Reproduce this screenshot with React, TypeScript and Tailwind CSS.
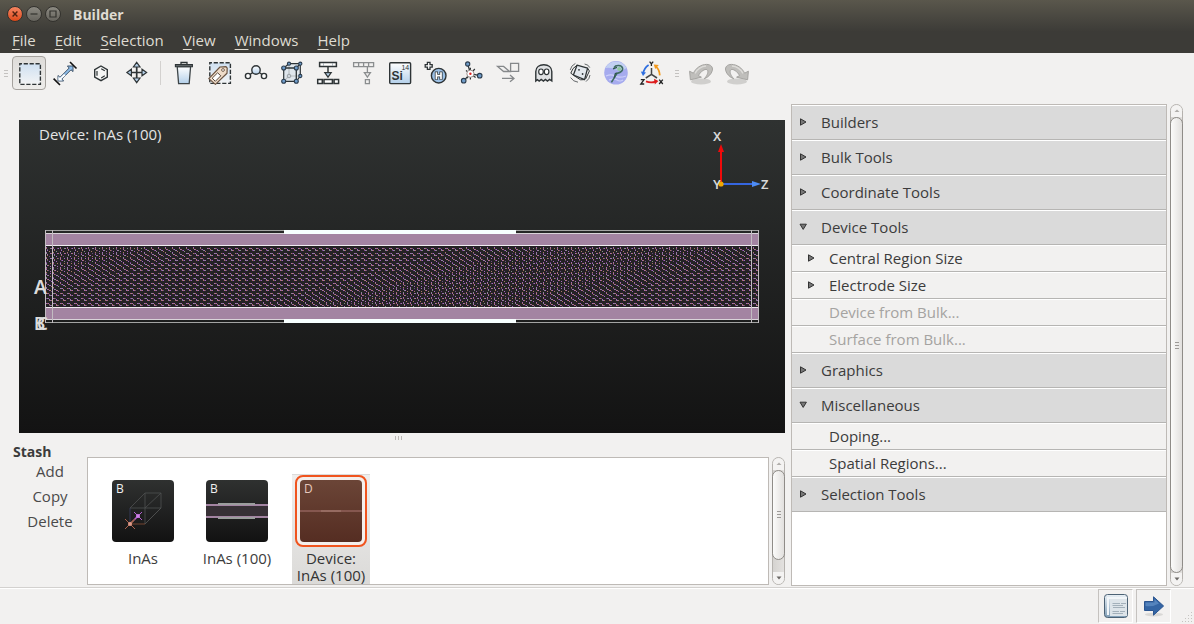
import { useState } from "react";
import type { ReactNode } from "react";

const INK = "#2e3436";
const BLUE = "#b4cfe8";

function Icon({ children }: { children: ReactNode }) {
  return (
    <svg viewBox="0 0 28 28" className="size-7" fill="none" stroke={INK} strokeWidth="1.4" aria-hidden="true">
      {children}
    </svg>
  );
}

function Dot({ x, y, r = 2 }: { x: number; y: number; r?: number }) {
  return <circle cx={x} cy={y} r={r} fill="#6f9cc9" stroke="#2b3c4e" strokeWidth="1.1" />;
}

const tools: { name: string; icon: ReactNode }[] = [
  {
    name: "Rectangle select",
    icon: (
      <>
        <defs>
          <linearGradient id="sky" x1="0" y1="0" x2="0" y2="1">
            <stop offset="0" stopColor="#cfe0f1" />
            <stop offset="1" stopColor="#f3f4f5" />
          </linearGradient>
          <linearGradient id="pale" x1="0" y1="0" x2="0" y2="1">
            <stop offset="0" stopColor="#ffffff" />
            <stop offset="1" stopColor="#b4d0ea" />
          </linearGradient>
        </defs>
        <rect x="4.8" y="4.8" width="20.6" height="20.6" fill="url(#sky)" strokeDasharray="4.2 1.7" strokeDashoffset="2" strokeWidth="1.4" />
      </>
    ),
  },
  {
    name: "Measure",
    icon: (
      <>
        <path d="M7 22V16.5L9 18.3L18.2 9L16.4 7H22V12.6L20 10.8L10.8 20L12.6 22Z" fill="#8dbce8" stroke="#40546a" strokeWidth="1" />
        <path d="M7.4 21.5V17.3L9 19L13 15L14.6 16.2L10.2 20L11.6 21.5Z" fill="#fff" stroke="none" />
        <path d="M2.6 19.6L9 26M19 3L25.5 9.5" stroke="#111" strokeWidth="1.6" />
      </>
    ),
  },
  {
    name: "Hexagon",
    icon: (
      <>
        <path d="M14 7L20.3 10.6V18L14 21.6L7.7 18V10.6Z" fill="#f6f6f5" />
        <path d="M14.2 9.7L17.8 11.8M17.8 16.8L14.2 18.9M10 11.9V16.7" strokeWidth="1.2" />
      </>
    ),
  },
  {
    name: "Move",
    icon: (
      <>
        <path d="M13.7 7V20.5M7 13.5H20.5" strokeWidth="1.7" />
        <path d="M13.7 3.4L17 8H10.4ZM13.7 23.6L17 19H10.4ZM3.9 13.5L8.4 10.2V16.8ZM23.6 13.5L19 10.2V16.8Z" fill={BLUE} strokeWidth="1.2" />
      </>
    ),
  },
  {
    name: "Delete",
    icon: (
      <>
        <path d="M7.2 7.5H20.6L19.2 24.6H8.6Z" fill="url(#pale)" stroke="#3e4548" strokeWidth="1.3" />
        <path d="M5.4 7.8V5.6H22.4V7.8Z" fill="#6f7477" strokeWidth="1.1" />
        <path d="M11 5V3.5H17V5" strokeWidth="1.3" />
      </>
    ),
  },
  {
    name: "Tag selection",
    icon: (
      <>
        <rect x="3.8" y="3.8" width="20.6" height="20.6" fill="url(#sky)" strokeDasharray="4.2 1.7" strokeDashoffset="2" strokeWidth="1.4" />
        <path d="M2.8 19.6L14 8L20 7.7L21.2 9.2L21 14.2L9.4 25.4Z" fill="#efdcc9" stroke="#6b5442" strokeWidth="1.2" strokeLinejoin="round" />
        <path d="M6.2 19.2L11.6 13.8L14.8 16.8L9.3 22.3Z" fill="#fff" stroke="#56473b" strokeWidth="1" />
        <circle cx="17" cy="11" r="1.4" fill="#fff" stroke="#6b5442" strokeWidth="0.9" />
      </>
    ),
  },
  {
    name: "Molecule",
    icon: (
      <>
        <path d="M6 17L14 11L22 17" />
        <circle cx="14" cy="11" r="4.2" fill="url(#pale)" />
        <circle cx="6" cy="17" r="2.6" fill="#fff" />
        <circle cx="22" cy="17" r="2.6" fill="#fff" />
      </>
    ),
  },
  {
    name: "Unit cell",
    icon: (
      <>
        <path d="M5.7 9L11 4.7H22.3V17L18.3 22.3H5.7Z" fill="#dfe6ec" strokeWidth="1.2" />
        <path d="M11 4.7V17H22.3M11 17L5.7 22.3" stroke="#b9bdc0" strokeWidth="1.1" />
        <path d="M5.7 9H18.3V22.3M18.3 9L22.3 4.7" strokeWidth="1.3" />
        <circle cx="11" cy="17" r="1.8" fill="#cfd6dc" stroke="#9aa0a5" strokeWidth="1" />
        <Dot x={5.7} y={9} /><Dot x={18.3} y={9} /><Dot x={5.7} y={22.3} /><Dot x={18.3} y={22.3} />
        <Dot x={11} y={4.7} r={1.6} /><Dot x={22.3} y={4.7} r={1.6} /><Dot x={22.3} y={17} r={1.6} />
      </>
    ),
  },
  {
    name: "Split into device",
    icon: (
      <>
        <g fill="#fff" strokeWidth="1.5">
          <path d="M5.6 3.6H22.4V7.6H5.6ZM3.7 20.6H8.3V24.6H3.7ZM10 20.6H18.4V24.6H10ZM20.1 20.6H24.6V24.6H20.1Z" />
          <path d="M14 8V13.6" />
          <path d="M10.8 13.6H17.2L14 18.2Z" fill={BLUE} strokeWidth="1.2" />
        </g>
        <path d="M9.5 4V7M18.5 4V7" stroke="#9aa3aa" strokeWidth="0.7" />
      </>
    ),
  },
  {
    name: "Extract electrode",
    icon: (
      <g stroke="#8b8e8f" strokeWidth="1.3">
        <path d="M3.6 3.6H23.6V7.6H3.6ZM8.6 3.6V7.6M13.6 3.6V7.6M18.6 3.6V7.6" />
        <path d="M17.4 8V13.6M14.4 13.6H20.4L17.4 18ZM15.4 20.6H19.4V24.6H15.4Z" />
      </g>
    ),
  },
  {
    name: "Change element",
    icon: (
      <>
        <rect x="3.7" y="3.7" width="20.9" height="20.9" rx="1" fill="url(#pale)" />
        <text x="5.6" y="21.4" fontSize="12" fontWeight="700" fontFamily="Liberation Sans, sans-serif" fill={INK} stroke="none">Si</text>
        <text x="15.4" y="11" fontSize="7" fontFamily="Liberation Sans, sans-serif" fill={INK} stroke="none">14</text>
      </>
    ),
  },
  {
    name: "Add hydrogen",
    icon: (
      <>
        <circle cx="16.7" cy="16.7" r="7.3" fill="#9cc1e6" strokeWidth="1.4" />
        <path d="M14.4 12.6V20.8M19 12.6V20.8M14.4 16.7H19" strokeWidth="3.2" />
        <path d="M14.4 13.2V20.2M19 13.2V20.2M14.4 16.7H19" stroke="#fff" strokeWidth="1.7" />
        <path d="M5.4 3.4H8V5.6H10.2V8.2H8V10.4H5.4V8.2H3.2V5.6H5.4Z" fill="#fff" strokeWidth="1.3" />
      </>
    ),
  },
  {
    name: "Select neighbours",
    icon: (
      <>
        <path d="M9.7 5L12.4 14.7L5.7 21.7M12.4 14.7L21.7 16.7M16.8 10L8.6 19.4M8 11.4L17.6 18.6M12.4 8.8V20.6" strokeWidth="1.2" />
        <circle cx="12.4" cy="14.7" r="3.6" fill="#fff" stroke="#9b8f8d" strokeWidth="1" />
        <circle cx="12.4" cy="14.7" r="1.2" fill="#d22" stroke="none" />
        <Dot x={9.7} y={5} r={2.1} /><Dot x={5.7} y={21.7} r={2.3} /><Dot x={21.7} y={16.7} r={2.3} />
      </>
    ),
  },
  {
    name: "Shear",
    icon: (
      <g stroke="#85888a" strokeWidth="1.3">
        <path d="M3.6 7.4H9.6L15.7 12.5H9.6Z" />
        <path d="M16.6 4.4H24.6V12.4H16.6Z" />
        <path d="M8 19.4H20M16 16L20 19.4L16 22.8" />
      </g>
    ),
  },
  {
    name: "Ghost atoms",
    icon: (
      <>
        <path d="M5.8 22V12.6C5.8 8 9.4 5.8 13.8 5.8C18.2 5.8 21.8 8 21.8 12.6V22L19.6 20.4L17.4 22L15.4 20.4L13.4 22L11.2 20.4L9.2 22L7.4 20.6Z" fill="#e0e2e4" strokeWidth="1.4" />
        <ellipse cx="11" cy="12.8" rx="2.3" ry="2.8" fill="#fff" strokeWidth="1.2" />
        <ellipse cx="16.6" cy="12.8" rx="2.3" ry="2.8" fill="#fff" strokeWidth="1.2" />
      </>
    ),
  },
  {
    name: "Rattle",
    icon: (
      <>
        <path d="M11 6.2L21.6 9.2L18.6 20.6L7.4 16Z" fill="#e3e8ed" strokeWidth="1.3" strokeLinejoin="round" />
        <path d="M11 6.2L7 9.6L4.8 14.2L7.4 16M7.6 16.4L14.6 20.8L18.6 20.6M21.6 9.2L23.4 12L19.6 20" strokeWidth="1" />
        <path d="M4.2 11Q5 6.6 9.4 4.4M18.6 5Q22.6 5.6 23.8 8.6M4.6 18.6Q7 22.6 12 23.2M24 16Q23.6 20 20 22.6" stroke="#54585a" strokeWidth="0.9" />
        <circle cx="13" cy="10.8" r="0.9" fill={INK} stroke="none" />
        <circle cx="16.6" cy="15" r="0.9" fill={INK} stroke="none" />
      </>
    ),
  },
  {
    name: "Optimizer",
    icon: (
      <>
        <circle cx="14" cy="13.8" r="11.8" fill="#a6abee" stroke="none" />
        <path d="M3.4 9A11.8 11.8 0 0 1 24.6 9Q19 13 14 10.6T3.4 9Z" fill="#c2d0f2" stroke="none" />
        <path d="M4 17Q9 14.6 13 17T24 17M7 21Q12 19 15 21T21 21" stroke="#cdd0fa" strokeWidth="1.2" />
        <path d="M12 8.6C13.6 5.8 19.8 5.8 20.6 9.2C21.2 12.6 17.6 13.8 15 14.4L9.4 23.4" stroke="#3f6c62" strokeWidth="1.6" />
        <path d="M11 9.8L15 8.4M15 14L13.4 14.6L12.2 19" stroke="#2f574d" strokeWidth="1.3" />
        <circle cx="17.2" cy="10" r="2.1" fill="#8fc6a0" stroke="none" />
      </>
    ),
  },
  {
    name: "Rotate axes",
    icon: (
      <>
        <path d="M13.5 9V15.4L7.8 19M13.5 15.4L19 19" stroke="#444" strokeWidth="1.5" />
        <path d="M10.6 6Q6 9 5 15" stroke="#2f6fe0" strokeWidth="1.8" />
        <path d="M2.8 12.6L5 17L8 13.4Z" fill="#2f6fe0" stroke="none" />
        <path d="M21.8 16.4Q21.4 10.4 18 7.6" stroke="#f59a1b" strokeWidth="1.8" />
        <path d="M15.8 5.4L20.8 6L17.2 10Z" fill="#f59a1b" stroke="none" />
        <path d="M8 22.4Q13 24.4 17.4 22.6" stroke="#dd1c1c" strokeWidth="1.8" />
        <path d="M16 19.8L20.4 22L16.8 25.4Z" fill="#dd1c1c" stroke="none" />
        <path d="M11.6 2.6L13.4 4.8M15.2 2.6L13.4 4.8V7M2.8 20.6H6L2.8 25H6.2M21.2 20.6L24.8 25M24.8 20.6L21.2 25" stroke="#222" strokeWidth="1.3" />
      </>
    ),
  },
];

function HistoryArrow({ flip }: { flip?: boolean }) {
  return (
    <svg viewBox="0 0 28 28" className={flip ? "size-7 -scale-x-100" : "size-7"} aria-hidden="true">
      <ellipse cx="14" cy="22.4" rx="10" ry="3" fill="#d0cfcd" />
      <path
        d="M2.6 12.2L6.4 14.2C8.8 9 14 5.4 19.6 5.4C23.8 5.4 26 8 25.4 11.2C24.6 15 21 18.4 17.2 19.8C19.8 17 21.6 13.6 20.6 11.4C19.2 8.8 14 11.8 11.4 16.6L14.4 18.2L3.4 20.8Z"
        fill="#bfbebb"
        stroke="#a5a4a1"
        strokeWidth="1"
      />
      <path d="M8 14.4Q12 7.4 19 7" fill="none" stroke="#dddcd9" strokeWidth="1.4" />
    </svg>
  );
}

function ToolButton({ name, active, children }: { name: string; active?: boolean; children: ReactNode }) {
  return (
    <button
      type="button"
      aria-label={name}
      title={name}
      className={
        active
          ? "flex size-[34px] items-center justify-center rounded border border-[#a5a29e] bg-linear-to-b from-[#dedcd9] to-[#eeedeb]"
          : "flex size-[34px] items-center justify-center rounded"
      }
    >
      {children}
    </button>
  );
}

function Grip() {
  return (
    <span className="flex w-1 flex-col gap-[2px]">
      <i className="h-px bg-[#c4c2c0]" />
      <i className="h-px bg-[#c4c2c0]" />
      <i className="h-px bg-[#c4c2c0]" />
    </span>
  );
}

/* Zinc-blende lattice seen along Y: small bonds whose form drifts slowly along Z. */
const LATTICE_COLORS = ["#a566bd", "#a87664", "#868f86", "#6d4a80"];
const LATTICE = (() => {
  const paths = ["", "", "", ""];
  const forms = [
    [[0, 0], [0, 1], [1, 2], [1, 3], [4, 1], [5, 1], [3, 4]],
    [[0, 0], [0, 1], [0, 2], [1, 3], [2, 3], [4, 4], [4, 1]],
    [[0, 0], [0, 1], [1, 2], [2, 2], [3, 3], [4, 3], [5, 4]],
    [[0, 1], [1, 1], [2, 1], [3, 2], [3, 3], [4, 3], [5, 3]],
  ];
  for (let j = 0; j < 12; j++) {
    for (let i = 0; i < 102; i++) {
      const phase = i / 26 + j / 10;
      const form = forms[Math.floor(Math.abs(Math.sin(phase)) * 3.99)];
      form.forEach(([u, v], k) => {
        const x = 27 + i * 7 + u;
        const y = 127 + j * 5 + v;
        if (x > 739 || y > 186) return;
        const mix = (k * 3 + (i % 2) + j * 2) % 7;
        const color = mix < 3 ? 0 : mix < 5 ? 1 : mix < 6 ? 2 : 3;
        paths[color] += `M${x} ${y}h1v1h-1z`;
      });
    }
  }
  return paths;
})();

function Scene() {
  return (
    <svg viewBox="0 0 766 313" preserveAspectRatio="xMidYMid slice" className="block h-full w-full" role="img" aria-label="Device model">
      <rect x="27" y="114" width="712" height="12" fill="#a384a2" />
      <rect x="27" y="188" width="712" height="11" fill="#a384a2" />
      <g shapeRendering="crispEdges">
        <rect x="27" y="126" width="712" height="61" fill="#242225" />
        {LATTICE.map((d, k) => (
          <path key={k} d={d} fill={LATTICE_COLORS[k]} />
        ))}
        <path d="M27 110.5H740M27 202.5H740" stroke="#a3a4a3" />
        <path d="M27 113.5H740M27 199.5H740" stroke="#d9d4d9" />
        <path d="M27 125.5H740M27 187.5H740" stroke="#efeaef" />
        <path d="M26.5 110V203M33.5 110V203M732.5 110V203M739.5 110V203" stroke="#c2bcc1" />
        <path d="M265 110H497V114H265ZM265 199H497V203H265Z" fill="#f7ffff" />
      </g>
      <path d="M702 63V32" stroke="#f00a0a" strokeWidth="2" />
      <path d="M702 24L705 32H699Z" fill="#f00a0a" />
      <path d="M703 64H734" stroke="#3566e0" strokeWidth="2" />
      <path d="M742 64L733 61V67Z" fill="#4d8cf5" />
      <circle cx="702" cy="64" r="2.6" fill="#f0a800" />
      <g fill="#d8d8d8" fontFamily="Noto Sans, sans-serif" fontWeight="600" fontSize="13">
        <text x="694" y="21">X</text>
        <text x="694" y="69">Y</text>
        <text x="742" y="69">Z</text>
      </g>
      <g fill="#dcdcdc" fontFamily="Noto Sans, sans-serif" fontWeight="600" fontSize="19">
        <text x="15" y="174">A</text>
        <text x="15" y="210" fontSize="17">B</text>
        <text x="18" y="210" fontSize="17">C</text>
      </g>
    </svg>
  );
}

function Scrollbar({ thumb }: { thumb: string }) {
  return (
    <div className="flex w-[13px] shrink-0 flex-col rounded-full border border-[#b5b2ae] bg-linear-to-r from-[#d5d3d0] to-[#e3e1df]" aria-hidden="true">
      <div className="flex h-3 shrink-0 items-center justify-center rounded-t-full bg-[#f4f3f2]">
        <svg viewBox="0 0 6 4" className="h-1 w-1.5"><path d="M0.5 3L3 0.5L5.5 3Z" fill="#b0adaa" /></svg>
      </div>
      <div className="flex grow flex-col">
        <div className={`${thumb} -mx-px flex flex-col items-center justify-center gap-[2px] rounded-full border border-[#8f8c88] bg-linear-to-r from-[#fbfbfa] to-[#e2e0de]`}>
          <i className="h-px w-1 bg-[#9d9a97]" />
          <i className="h-px w-1 bg-[#9d9a97]" />
          <i className="h-px w-1 bg-[#9d9a97]" />
        </div>
      </div>
      <div className="flex h-3 shrink-0 items-center justify-center rounded-b-full bg-[#f4f3f2]">
        <svg viewBox="0 0 6 4" className="h-1 w-1.5"><path d="M0.5 0.5L3 3.5L5.5 0.5Z" fill="#6b6865" /></svg>
      </div>
    </div>
  );
}

function Disclosure({ open }: { open?: boolean }) {
  return (
    <svg viewBox="0 0 8 8" className="size-2 shrink-0" fill="#777" stroke="#333" aria-hidden="true">
      {open ? <path d="M1 1.2H7.4L4.2 6.4Z" /> : <path d="M1.5 0.8L7 4L1.5 7.2Z" />}
    </svg>
  );
}

type Entry = { label: string; arrow?: boolean; disabled?: boolean };
const sections: { title: string; open?: boolean; entries: Entry[] }[] = [
  { title: "Builders", entries: [] },
  { title: "Bulk Tools", entries: [] },
  { title: "Coordinate Tools", entries: [] },
  {
    title: "Device Tools",
    open: true,
    entries: [
      { label: "Central Region Size", arrow: true },
      { label: "Electrode Size", arrow: true },
      { label: "Device from Bulk...", disabled: true },
      { label: "Surface from Bulk...", disabled: true },
    ],
  },
  { title: "Graphics", entries: [] },
  { title: "Miscellaneous", open: true, entries: [{ label: "Doping..." }, { label: "Spatial Regions..." }] },
  { title: "Selection Tools", entries: [] },
];

function Section({ title, open: initial, entries }: { title: string; open?: boolean; entries: Entry[] }) {
  const [open, setOpen] = useState(!!initial);
  return (
    <section>
      <button
        type="button"
        aria-expanded={open}
        onClick={() => setOpen(!open)}
        className="flex h-[35px] w-full items-center gap-[14px] border-t border-b border-t-white border-b-[#b6b5b3] bg-[#dadada] pb-px pl-[7px] text-left"
      >
        <Disclosure open={open} />
        {title}
      </button>
      {open &&
        entries.map((e) => (
          <button
            key={e.label}
            type="button"
            disabled={e.disabled}
            className="flex h-[27px] w-full items-center gap-[14px] border-t border-b border-t-white border-b-[#b6b5b3] bg-[#f2f1f0] pb-px pl-[15px] text-left disabled:text-[#a5a3a1]"
          >
            {e.arrow ? <Disclosure /> : <span className="size-2" />}
            {e.label}
          </button>
        ))}
    </section>
  );
}

function Thumb({ letter, children }: { letter: string; children: ReactNode }) {
  return (
    <svg viewBox="0 0 62 62" className="block size-[62px] rounded" aria-hidden="true">
      <defs>
        <linearGradient id={`thumb-${letter}`} x1="0" y1="0" x2="0" y2="1">
          <stop offset="0" stopColor={letter === "D" ? "#6b4537" : "#2f3130"} />
          <stop offset="1" stopColor={letter === "D" ? "#552d22" : "#121212"} />
        </linearGradient>
      </defs>
      <rect width="62" height="62" fill={`url(#thumb-${letter})`} />
      {children}
      <text x="4" y="13" fontSize="12" fontFamily="Open Sans, sans-serif" fill={letter === "D" ? "#e6c9bd" : "#f0f0f0"}>{letter}</text>
    </svg>
  );
}

const menus = ["File", "Edit", "Selection", "View", "Windows", "Help"];

export default function App() {
  return (
    <div className="flex min-h-screen flex-col bg-[#f2f1f0] font-['Open_Sans',sans-serif] text-[15px] leading-5 text-[#3c3c3c]">
      <header className="bg-linear-to-b from-[#5a574c] to-[#3c3b37] to-60% text-[#dfdbd2]">
        <div className="flex h-7 items-center pl-[7px]">
          <div className="flex gap-[3px]">
            <button type="button" aria-label="Close" className="size-4 rounded-full border border-[#33322e] bg-linear-to-b from-[#f58560] to-[#dd4814]">
              <svg viewBox="0 0 14 14" className="size-full" stroke="#4d2110" strokeWidth="1.4"><path d="M4.6 4.6L9.4 9.4M9.4 4.6L4.6 9.4" /></svg>
            </button>
            <button type="button" aria-label="Minimize" className="size-4 rounded-full border border-[#33322e] bg-linear-to-b from-[#8c8a82] to-[#66645d]">
              <svg viewBox="0 0 14 14" className="size-full" stroke="#33322e" strokeWidth="1.2"><path d="M3.5 7H10.5" /></svg>
            </button>
            <button type="button" aria-label="Maximize" className="size-4 rounded-full border border-[#33322e] bg-linear-to-b from-[#8c8a82] to-[#66645d]">
              <svg viewBox="0 0 14 14" className="size-full" stroke="#33322e" strokeWidth="1.2" fill="none"><path d="M4 4H10V10H4Z" /></svg>
            </button>
          </div>
          <h1 className="ml-3 pt-[2px] text-[14px] font-bold">Builder</h1>
        </div>
        <nav className="flex h-[25px] items-center gap-[19px] pb-px pl-3">
          {menus.map((m) => (
            <button key={m} type="button">
              <span className="underline underline-offset-3">{m[0]}</span>
              {m.slice(1)}
            </button>
          ))}
        </nav>
      </header>

      <div role="toolbar" aria-label="Tools" className="flex h-[51px] items-start gap-[2px] pt-[3px] pl-1">
        <div className="flex h-[34px] w-[6px] items-center"><Grip /></div>
        {tools.slice(0, 4).map((t, i) => (
          <ToolButton key={t.name} name={t.name} active={i === 0}><Icon>{t.icon}</Icon></ToolButton>
        ))}
        <div className="flex h-[34px] w-[9px] items-center justify-center"><span className="h-6 w-px bg-[#d3d1cf]" /></div>
        {tools.slice(4).map((t) => (
          <ToolButton key={t.name} name={t.name}><Icon>{t.icon}</Icon></ToolButton>
        ))}
        <div className="flex h-[34px] w-[11px] items-center justify-center"><Grip /></div>
        <ToolButton name="Undo"><HistoryArrow /></ToolButton>
        <ToolButton name="Redo"><HistoryArrow flip /></ToolButton>
      </div>

      <div className="flex grow">
        <main className="flex min-w-0 grow flex-col pt-4 pr-[6px]">
          <div className="relative ml-[19px] grow basis-[313px] bg-linear-to-b from-[#2f3231] to-[#131313]">
            <div className="absolute inset-0"><Scene /></div>
            <p className="absolute top-1 left-5 text-[#e4e4e4]">Device: InAs (100)</p>
          </div>
          <div className="flex h-[10px] items-center justify-center gap-[2px] pl-3" aria-hidden="true">
            <i className="h-1 w-px bg-[#bbb8b5]" />
            <i className="h-1 w-px bg-[#bbb8b5]" />
            <i className="h-1 w-px bg-[#bbb8b5]" />
          </div>
          <section className="flex shrink-0 pb-[2px]">
            <div className="w-[87px] shrink-0 pl-[13px]">
              <h2 className="h-4 text-[14px] leading-[18px] font-bold">Stash</h2>
              <div className="flex flex-col items-center text-[#4a4a4a]">
                <button type="button" className="h-[25px] pb-px">Add</button>
                <button type="button" className="h-[25px] pb-px">Copy</button>
                <button type="button" className="h-[25px] pb-px">Delete</button>
              </div>
            </div>
            <div className="mt-[14px] flex min-w-0 grow gap-[3px]">
              <ul className="flex h-32 min-w-0 grow gap-4 overflow-hidden border border-[#bebab6] bg-white pt-4 pl-4 text-center leading-[17px]">
                <li className="flex w-[78px] flex-col items-center pt-[6px]">
                  <Thumb letter="B">
                    <g fill="none" stroke="#4f5050" strokeWidth="0.8">
                      <path d="M18 28L33 13H49V28L33 44M18 28H49M33 13V44L49 28M33 28L49 13" />
                      <path d="M18 28V44" stroke="#3a3f66" />
                      <path d="M18 44H33" stroke="#8a4f35" />
                    </g>
                    <path d="M18 44L22 40" stroke="#e0876f" strokeWidth="1.4" />
                    <path d="M22 40L26 36" stroke="#c86be0" strokeWidth="1.4" />
                    <path d="M22 32L30 40M30 32L22 40" stroke="#b35fd0" />
                    <path d="M13 39L23 49M23 39L13 49" stroke="#a8604c" />
                    <circle cx="26" cy="36" r="2" fill="#d080ea" />
                    <circle cx="18" cy="44" r="2" fill="#e09a88" />
                  </Thumb>
                  <span className="mt-2">InAs</span>
                </li>
                <li className="flex w-[78px] flex-col items-center pt-[6px]">
                  <Thumb letter="B">
                    <path d="M0 25H62V37H0Z" fill="#373036" />
                    <path d="M0 24H62V26H0ZM0 36H62V38H0Z" fill="#a384a2" />
                    <path d="M12 23H49V25H12ZM12 37H49V39H12Z" fill="#9b9d9d" />
                  </Thumb>
                  <span className="mt-2 whitespace-nowrap">InAs (100)</span>
                </li>
                <li className="flex h-[110px] w-[78px] flex-col items-center border-t border-[#dcdbda] bg-linear-to-b from-[#efeeed] to-[#dbdad8] text-[#333]">
                  <span className="rounded-lg border-2 border-[#f0541e] bg-[#f4efec] p-[3px]">
                    <Thumb letter="D">
                      <path d="M0 30H62V32H0Z" fill="#85574f" />
                      <path d="M21 30H41V32H21Z" fill="#966b61" />
                    </Thumb>
                  </span>
                  <span className="mt-[3px] whitespace-nowrap">Device:<br />InAs (100)</span>
                </li>
              </ul>
              <Scrollbar thumb="grow-0 basis-[88%]" />
            </div>
          </section>
        </main>

        <aside className="flex w-[403px] shrink-0 gap-[3px] pr-[11px] pb-px">
          <div className="min-w-0 grow border border-[#bebab6] bg-white">
            {sections.map((s) => (
              <Section key={s.title} {...s} />
            ))}
          </div>
          <Scrollbar thumb="grow" />
        </aside>
      </div>

      <footer className="relative flex h-[37px] items-start justify-end gap-[3px] border-t border-[#d3d1cf] pt-px pr-[23px] shadow-[inset_0_1px_0_#fff]">
        <button type="button" aria-label="Show script" className="flex h-[34px] w-[35px] items-center justify-center border border-[#c5c2bf] border-r-white border-b-white">
          <svg viewBox="0 0 26 26" className="size-[26px]" aria-hidden="true">
            <defs>
              <linearGradient id="frame" x1="0" y1="0" x2="0" y2="1">
                <stop offset="0" stopColor="#eaf1f6" />
                <stop offset="1" stopColor="#7f9db5" />
              </linearGradient>
            </defs>
            <rect x="1.5" y="1.5" width="23" height="23" rx="3" fill="url(#frame)" stroke="#4c6275" />
            <path d="M4 4H24V6H6V22H4Z" fill="#f2f6f9" />
            <path d="M7 6H24V23H7Z" fill="#dde4e9" />
            <path d="M9.5 10.5H17M18 10.5H23M9.5 12.5H20M10 14.5H22M9.5 18.5H16M17 18.5H22M9.5 20.5H20" stroke="#a3b0ba" strokeWidth="1" />
          </svg>
        </button>
        <button type="button" aria-label="Send to" className="flex h-[34px] w-[35px] items-center justify-center border border-[#c5c2bf] border-r-white border-b-white">
          <svg viewBox="0 0 26 26" className="size-[26px]" aria-hidden="true">
            <ellipse cx="13" cy="21.6" rx="9" ry="1.8" fill="#d9d8d6" />
            <path d="M3.5 8.5H12.5V3.8L22.6 13L12.5 22.2V17.5H3.5Z" fill="#3465a4" stroke="#2b5590" />
            <path d="M4.5 9.5H13.5V6L18 10.4Q12 14 4.5 13Z" fill="#5584bd" />
          </svg>
        </button>
        <svg viewBox="0 0 12 12" className="absolute right-0 bottom-px size-3" fill="#c6c4c1" aria-hidden="true">
          <path d="M9 1h1v1h-1zM6 4h1v1h-1zM9 4h1v1h-1zM3 7h1v1h-1zM6 7h1v1h-1zM9 7h1v1h-1zM0 10h1v1h-1zM3 10h1v1h-1zM6 10h1v1h-1zM9 10h1v1h-1z" />
        </svg>
      </footer>
    </div>
  );
}
